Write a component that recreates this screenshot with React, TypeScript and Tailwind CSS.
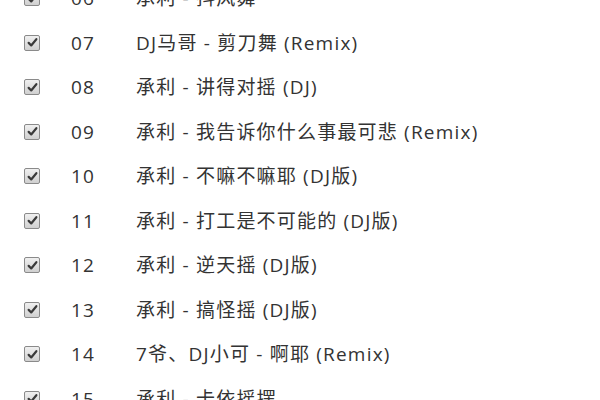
const tracks = [
    { no: "06", title: "承利 - 抖风舞" },
    { no: "07", title: "DJ马哥 - 剪刀舞 (Remix)" },
    { no: "08", title: "承利 - 讲得对摇 (DJ)" },
    { no: "09", title: "承利 - 我告诉你什么事最可悲 (Remix)" },
    { no: "10", title: "承利 - 不嘛不嘛耶 (DJ版)" },
    { no: "11", title: "承利 - 打工是不可能的 (DJ版)" },
    { no: "12", title: "承利 - 逆天摇 (DJ版)" },
    { no: "13", title: "承利 - 搞怪摇 (DJ版)" },
    { no: "14", title: "7爷、DJ小可 - 啊耶 (Remix)" },
    { no: "15", title: "承利 - 卡依摇摆" },
];

function CheckBox() {
    return (
        <span className="flex h-[16px] w-[16px] items-center justify-center rounded-[2px] border border-[#8a8a8a] bg-gradient-to-b from-[#f0f0f0] to-[#d0d0d0]">
            <svg viewBox="0 0 12 12" className="h-[11px] w-[11px]">
                <path d="M1.8 6.4 L4.6 9.2 L10.2 2.4" fill="none" stroke="#3a3a3a" strokeWidth="2.4" strokeLinecap="round" strokeLinejoin="round" />
            </svg>
        </span>
    );
}

export default function App() {
    return (
        <div className="h-[400px] w-[600px] overflow-hidden bg-white font-['Open_Sans','Noto_Sans_CJK_SC',sans-serif] text-[19px] tracking-[1.2px] text-[#333]">
            <div className="-mt-[24px] flex flex-col">
                {tracks.map((t) => (
                    <div key={t.no} className="flex h-[44.5px] items-center">
                        <div className="ml-[24px] w-[47px]">
                            <CheckBox />
                        </div>
                        <span className="w-[65px] tabular-nums">{t.no}</span>
                        <span className="whitespace-nowrap">{t.title}</span>
                    </div>
                ))}
            </div>
        </div>
    );
}
